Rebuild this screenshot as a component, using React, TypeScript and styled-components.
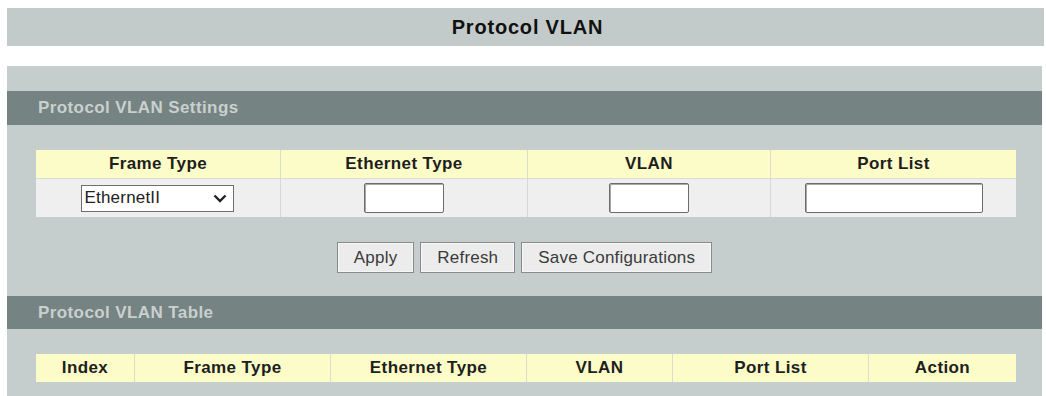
import styled, { createGlobalStyle } from 'styled-components'

const GlobalStyle = createGlobalStyle`
  html, body {
    margin: 0;
    padding: 0;
    background: #ffffff;
    font-family: "Liberation Sans", Arial, sans-serif;
    overflow: hidden;
  }
`

const Page = styled.div`
  display: flex;
  flex-direction: column;
  padding: 8px 2px 0 7px;
  height: 396px;
  box-sizing: border-box;
`

const TitleBar = styled.div`
  height: 38px;
  background: #c3cbca;
  display: flex;
  align-items: center;
  justify-content: center;
  font-size: 20px;
  font-weight: bold;
  letter-spacing: 0.8px;
  color: #111111;
  padding-left: 4px;
`

const Panel = styled.div`
  flex: 1;
  margin: 20px 2px 0 0;
  padding-top: 25px;
  background: #c6cecd;
  display: flex;
  flex-direction: column;
`

const SectionHeader = styled.div<{ $h: number }>`
  height: ${(p) => p.$h}px;
  background: #758382;
  display: flex;
  align-items: center;
  padding-left: 31px;
  font-size: 17px;
  font-weight: bold;
  letter-spacing: 0.4px;
  color: #c9d0cf;
`

const Grid = styled.div<{ $cols: string }>`
  display: grid;
  grid-template-columns: ${(p) => p.$cols};
  margin: 25px 26px 0 29px;
`

const HeadCell = styled.div<{ $first?: boolean }>`
  height: 28px;
  background: #fcfcc8;
  border-left: ${(p) => (p.$first ? 'none' : '1px solid #dcdccb')};
  display: flex;
  align-items: center;
  justify-content: center;
  font-size: 17px;
  font-weight: bold;
  letter-spacing: 0.4px;
  color: #1e1e1e;
`

const DataCell = styled.div<{ $first?: boolean }>`
  height: 38px;
  background: #eeefee;
  border-top: 1px solid #dcdcd6;
  border-left: ${(p) => (p.$first ? 'none' : '1px solid #d6d8d4')};
  display: flex;
  align-items: center;
  justify-content: center;
`

const SelectBox = styled.div`
  width: 153px;
  height: 27px;
  box-sizing: border-box;
  background: #ffffff;
  border: 1px solid #6f6f6f;
  display: flex;
  align-items: center;
  justify-content: space-between;
  padding: 0 6px 0 3px;
  font-size: 17px;
  letter-spacing: 0.2px;
  color: #222222;
  margin-right: 2px;
`

const TextInput = styled.div<{ $w: number }>`
  width: ${(p) => p.$w}px;
  height: 30px;
  box-sizing: border-box;
  background: #ffffff;
  border: 1px solid #6c6c6c;
  border-radius: 2px;
  box-shadow: inset 1px 1px 0 #a8a8a8;
`

const ButtonRow = styled.div`
  display: flex;
  justify-content: center;
  gap: 6px;
  margin: 25px 0 23px 0;
`

const Button = styled.button`
  height: 31px;
  padding: 0 16px;
  background: #ececec;
  border: 1px solid #8a8a8a;
  box-shadow: inset 0 0 0 1px #f6f6f6;
  font-family: "Liberation Sans", Arial, sans-serif;
  font-size: 17px;
  letter-spacing: 0.2px;
  color: #3a3a3a;
  cursor: pointer;
`

const Chevron = () => (
  <svg width="14" height="9" viewBox="0 0 14 9">
    <path d="M1.5 1.5 L7 7 L12.5 1.5" fill="none" stroke="#222" strokeWidth="2.4" />
  </svg>
)

const settingsCols = ['Frame Type', 'Ethernet Type', 'VLAN', 'Port List']
const tableCols = ['Index', 'Frame Type', 'Ethernet Type', 'VLAN', 'Port List', 'Action']

export default function App() {
  return (
    <>
      <GlobalStyle />
      <Page>
        <TitleBar>Protocol VLAN</TitleBar>
        <Panel>
          <SectionHeader $h={34}>Protocol VLAN Settings</SectionHeader>

          <Grid $cols="244px 247px 243px 246px">
            {settingsCols.map((c, i) => (
              <HeadCell key={c} $first={i === 0}>
                {c}
              </HeadCell>
            ))}
            <DataCell $first>
              <SelectBox>
                <span>EthernetII</span>
                <Chevron />
              </SelectBox>
            </DataCell>
            <DataCell>
              <TextInput $w={80} />
            </DataCell>
            <DataCell>
              <TextInput $w={80} />
            </DataCell>
            <DataCell>
              <TextInput $w={178} />
            </DataCell>
          </Grid>

          <ButtonRow>
            <Button>Apply</Button>
            <Button>Refresh</Button>
            <Button>Save Configurations</Button>
          </ButtonRow>

          <SectionHeader $h={33}>Protocol VLAN Table</SectionHeader>

          <Grid $cols="98px 196px 196px 146px 196px 148px">
            {tableCols.map((c, i) => (
              <HeadCell key={c} $first={i === 0}>
                {c}
              </HeadCell>
            ))}
          </Grid>
        </Panel>
      </Page>
    </>
  )
}
